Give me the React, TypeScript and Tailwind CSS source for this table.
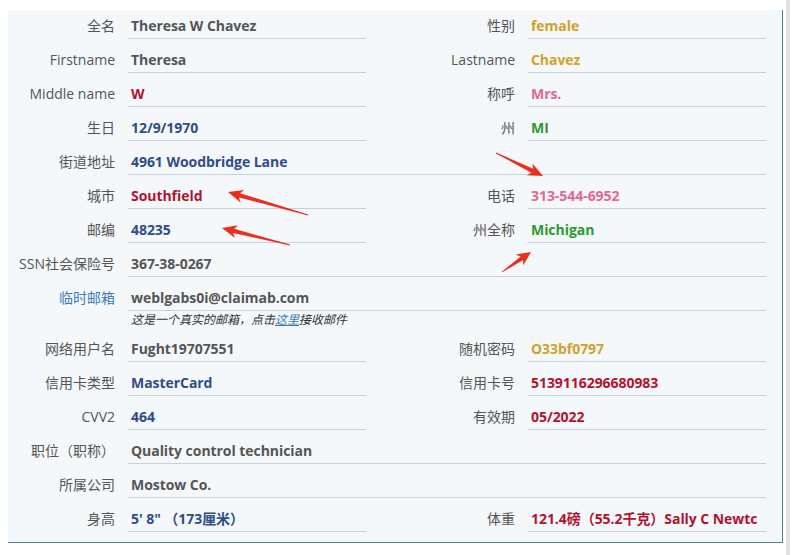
import React from "react";

const C = {
  gray: "text-[#555555]",
  blue: "text-[#2f4d86]",
  red: "text-[#b3122e]",
  gold: "text-[#d0a22a]",
  pink: "text-[#e26890]",
  green: "text-[#2c9a2f]",
};

type Item = { label: string; value: string; color: string; labelColor?: string };

const FONT = "font-['Open_Sans','Noto_Sans_CJK_SC',sans-serif]";

function Label({ text, color }: { text: string; color?: string }) {
  return (
    <div
      className={`flex items-end justify-end pr-[13px] pb-[3px] text-[14px] leading-[20px] whitespace-nowrap ${color ?? "text-[#555555]"}`}
    >
      {text}
    </div>
  );
}

function Value({ text, color }: { text: string; color: string }) {
  return (
    <div
      className={`flex items-end pb-[2px] pl-[3px] border-b border-[#c9d1d8] overflow-hidden whitespace-nowrap text-[14px] leading-[20px] font-bold tracking-[-0.05px] ${color}`}
    >
      {text}
    </div>
  );
}

function Pair({ l, r, first }: { l: Item; r: Item; first?: boolean }) {
  return (
    <div
      className={`grid grid-cols-[120px_238px_42px_120px_238px] ${first ? "h-[29px]" : "h-[34px]"}`}
    >
      <Label text={l.label} color={l.labelColor} />
      <Value text={l.value} color={l.color} />
      <div />
      <Label text={r.label} color={r.labelColor} />
      <Value text={r.value} color={r.color} />
    </div>
  );
}

function Full({ item }: { item: Item }) {
  return (
    <div className="grid grid-cols-[120px_638px] h-[34px]">
      <Label text={item.label} color={item.labelColor} />
      <Value text={item.value} color={item.color} />
    </div>
  );
}

function arrowPoints(tx: number, ty: number, hx: number, hy: number) {
  const dx = hx - tx;
  const dy = hy - ty;
  const L = Math.hypot(dx, dy);
  const ux = dx / L;
  const uy = dy / L;
  const nx = -uy;
  const ny = ux;
  const h = Math.min(15, L * 0.4);
  const w1 = 2.2;
  const w2 = 6.5;
  const pts: [number, number][] = [
    [0, -0.4],
    [L - h + 3, -w1],
    [L - h, -w2],
    [L, 0],
    [L - h, w2],
    [L - h + 3, w1],
    [0, 0.4],
  ];
  return pts
    .map(([a, b]) => `${(tx + ux * a + nx * b).toFixed(1)},${(ty + uy * a + ny * b).toFixed(1)}`)
    .join(" ");
}

export default function App() {
  return (
    <div className={`relative w-[803px] h-[555px] bg-white overflow-hidden ${FONT}`}>
      <div className="flex h-full">
        <div className="ml-[8px] mt-[10px] w-[775px] h-[533px] bg-[#f4f8fb] border-r border-b border-[#4f7f8c] pb-[10px]">
          <Pair
            first
            l={{ label: "全名", value: "Theresa W Chavez", color: C.gray }}
            r={{ label: "性别", value: "female", color: C.gold }}
          />
          <Pair
            l={{ label: "Firstname", value: "Theresa", color: C.gray }}
            r={{ label: "Lastname", value: "Chavez", color: C.gold }}
          />
          <Pair
            l={{ label: "Middle name", value: "W", color: C.red }}
            r={{ label: "称呼", value: "Mrs.", color: C.pink }}
          />
          <Pair
            l={{ label: "生日", value: "12/9/1970", color: C.blue }}
            r={{ label: "州", value: "MI", color: C.green }}
          />
          <Full item={{ label: "街道地址", value: "4961 Woodbridge Lane", color: C.blue }} />
          <Pair
            l={{ label: "城市", value: "Southfield", color: C.red }}
            r={{ label: "电话", value: "313-544-6952", color: C.pink }}
          />
          <Pair
            l={{ label: "邮编", value: "48235", color: C.blue }}
            r={{ label: "州全称", value: "Michigan", color: C.green }}
          />
          <Full item={{ label: "SSN社会保险号", value: "367-38-0267", color: C.gray }} />
          <Full
            item={{
              label: "临时邮箱",
              value: "weblgabs0i@claimab.com",
              color: C.gray,
              labelColor: "text-[#3b7bbd]",
            }}
          />
          <div className="grid grid-cols-[120px_638px] h-[17px]">
            <div />
            <div className="pl-[3px] text-[12px] leading-[17px] italic text-[#333333] whitespace-nowrap">
              这是一个真实的邮箱，点击
              <span className="text-[#3b7bbd] underline">这里</span>
              接收邮件
            </div>
          </div>
          <Pair
            l={{ label: "网络用户名", value: "Fught19707551", color: C.gray }}
            r={{ label: "随机密码", value: "O33bf0797", color: C.gold }}
          />
          <Pair
            l={{ label: "信用卡类型", value: "MasterCard", color: C.blue }}
            r={{ label: "信用卡号", value: "5139116296680983", color: C.red }}
          />
          <Pair
            l={{ label: "CVV2", value: "464", color: C.blue }}
            r={{ label: "有效期", value: "05/2022", color: C.red }}
          />
          <Full item={{ label: "职位（职称）", value: "Quality control technician", color: C.gray }} />
          <Full item={{ label: "所属公司", value: "Mostow Co.", color: C.gray }} />
          <Pair
            l={{ label: "身高", value: "5' 8\" （173厘米）", color: C.blue }}
            r={{ label: "体重", value: "121.4磅（55.2千克）Sally C Newtc", color: C.red }}
          />
        </div>
        <div className="ml-[3px] w-[4px] h-full bg-[#e1e4e7]" />
      </div>
      <svg className="absolute inset-0 pointer-events-none" width="803" height="555">
        <polygon points={arrowPoints(308, 215, 228, 192)} fill="#ea2f1f" />
        <polygon points={arrowPoints(290, 245, 222, 228)} fill="#ea2f1f" />
        <polygon points={arrowPoints(496, 153, 543, 176)} fill="#ea2f1f" />
        <polygon points={arrowPoints(502, 272, 531, 252)} fill="#ea2f1f" />
      </svg>
    </div>
  );
}
